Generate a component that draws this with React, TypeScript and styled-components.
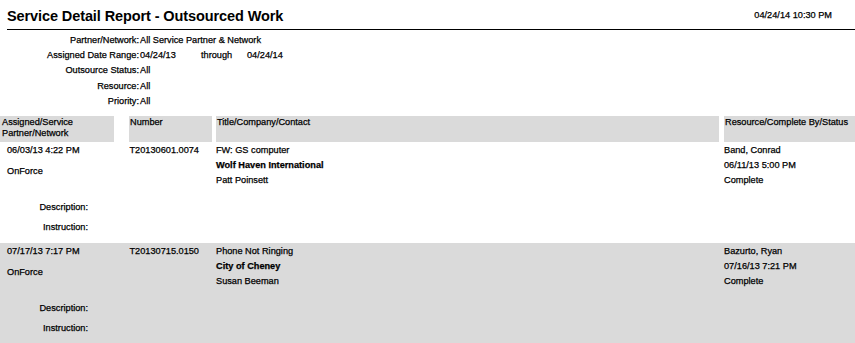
import React from "react";
import styled, { createGlobalStyle } from "styled-components";

const GlobalStyle = createGlobalStyle`
  html, body {
    margin: 0;
    padding: 0;
    background: #ffffff;
  }
  body {
    font-family: "Liberation Sans", Arial, sans-serif;
    font-size: 9.2px;
    color: #000000;
    -webkit-text-stroke: 0.25px #000;
  }
`;

const Page = styled.div`
  width: 855px;
  height: 343px;
  overflow: hidden;
`;

const ReportHeader = styled.header`
  display: flex;
  align-items: center;
  justify-content: space-between;
  height: 29px;
  margin-left: 7px;
  padding-right: 23px;
  border-bottom: 1px solid #000;
`;

const Title = styled.h1`
  margin: 0;
  padding-top: 3px;
  font-size: 14.5px;
  font-weight: bold;
  letter-spacing: -0.1px;
  -webkit-text-stroke: 0;
`;

const Stamp = styled.span`
  font-size: 9.2px;
`;

const Filters = styled.div`
  display: grid;
  grid-template-columns: 139px auto;
  column-gap: 1px;
  margin-top: 3px;
  line-height: 15.2px;
`;

const FilterLabel = styled.span`
  text-align: right;
  white-space: nowrap;
`;

const FilterValue = styled.span`
  display: flex;
  white-space: nowrap;
`;

const RangePart = styled.span<{ $w?: number }>`
  width: ${(p) => (p.$w ? `${p.$w}px` : "auto")};
`;

const Table = styled.div`
  margin-top: 7px;
`;

const HeadRow = styled.div`
  display: grid;
  grid-template-columns: 129px 87px 508px 1fr;
  height: 26px;
  line-height: 11px;
`;

const HeadCell = styled.div<{ $trim?: number; $pad?: number }>`
  background: #dadada;
  margin-right: ${(p) => p.$trim ?? 0}px;
  padding: 1px 0 0 ${(p) => p.$pad ?? 1}px;
`;

const Record = styled.div<{ $shaded?: boolean }>`
  background: ${(p) => (p.$shaded ? "#dadada" : "#ffffff")};
  padding: 1px 0 8px;
`;

const RecordTop = styled.div`
  display: grid;
  grid-template-columns: 129px 87px 508px 1fr;
  height: 45px;
  line-height: 15px;
`;

const Cell = styled.div<{ $pad?: number }>`
  display: flex;
  flex-direction: column;
  padding-left: ${(p) => p.$pad ?? 0}px;
  white-space: nowrap;
`;

const Line = styled.span<{ $bold?: boolean; $gap?: number }>`
  font-weight: ${(p) => (p.$bold ? "bold" : "normal")};
  margin-top: ${(p) => p.$gap ?? 0}px;
`;

const Details = styled.div`
  display: flex;
  flex-direction: column;
  gap: 5px;
  margin-top: 12px;
  line-height: 15px;
`;

const DetailLabel = styled.span`
  width: 88px;
  text-align: right;
`;

type Row = {
  assigned: string;
  network: string;
  number: string;
  title: string;
  company: string;
  contact: string;
  resource: string;
  completeBy: string;
  status: string;
};

const rows: Row[] = [
  {
    assigned: "06/03/13 4:22 PM",
    network: "OnForce",
    number: "T20130601.0074",
    title: "FW: GS computer",
    company: "Wolf Haven International",
    contact: "Patt Poinsett",
    resource: "Band, Conrad",
    completeBy: "06/11/13 5:00 PM",
    status: "Complete",
  },
  {
    assigned: "07/17/13 7:17 PM",
    network: "OnForce",
    number: "T20130715.0150",
    title: "Phone Not Ringing",
    company: "City of Cheney",
    contact: "Susan Beeman",
    resource: "Bazurto, Ryan",
    completeBy: "07/16/13 7:21 PM",
    status: "Complete",
  },
];

export default function App() {
  return (
    <Page>
      <GlobalStyle />
      <ReportHeader>
        <Title>Service Detail Report - Outsourced Work</Title>
        <Stamp>04/24/14 10:30 PM</Stamp>
      </ReportHeader>

      <Filters>
        <FilterLabel>Partner/Network:</FilterLabel>
        <FilterValue>All Service Partner &amp; Network</FilterValue>
        <FilterLabel>Assigned Date Range:</FilterLabel>
        <FilterValue>
          <RangePart $w={61}>04/24/13</RangePart>
          <RangePart $w={46}>through</RangePart>
          <RangePart>04/24/14</RangePart>
        </FilterValue>
        <FilterLabel>Outsource Status:</FilterLabel>
        <FilterValue>All</FilterValue>
        <FilterLabel>Resource:</FilterLabel>
        <FilterValue>All</FilterValue>
        <FilterLabel>Priority:</FilterLabel>
        <FilterValue>All</FilterValue>
      </Filters>

      <Table>
        <HeadRow>
          <HeadCell $trim={15} $pad={2}>
            Assigned/Service
            <br />
            Partner/Network
          </HeadCell>
          <HeadCell $trim={4}>Number</HeadCell>
          <HeadCell $trim={5}>Title/Company/Contact</HeadCell>
          <HeadCell>Resource/Complete By/Status</HeadCell>
        </HeadRow>

        {rows.map((r, i) => (
          <Record key={r.number} $shaded={i % 2 === 1}>
            <RecordTop>
              <Cell $pad={7}>
                <Line>{r.assigned}</Line>
                <Line $gap={6}>{r.network}</Line>
              </Cell>
              <Cell $pad={0.5}>
                <Line>{r.number}</Line>
              </Cell>
              <Cell>
                <Line>{r.title}</Line>
                <Line $bold>{r.company}</Line>
                <Line>{r.contact}</Line>
              </Cell>
              <Cell>
                <Line>{r.resource}</Line>
                <Line>{r.completeBy}</Line>
                <Line>{r.status}</Line>
              </Cell>
            </RecordTop>
            <Details>
              <DetailLabel>Description:</DetailLabel>
              <DetailLabel>Instruction:</DetailLabel>
            </Details>
          </Record>
        ))}
      </Table>
    </Page>
  );
}
